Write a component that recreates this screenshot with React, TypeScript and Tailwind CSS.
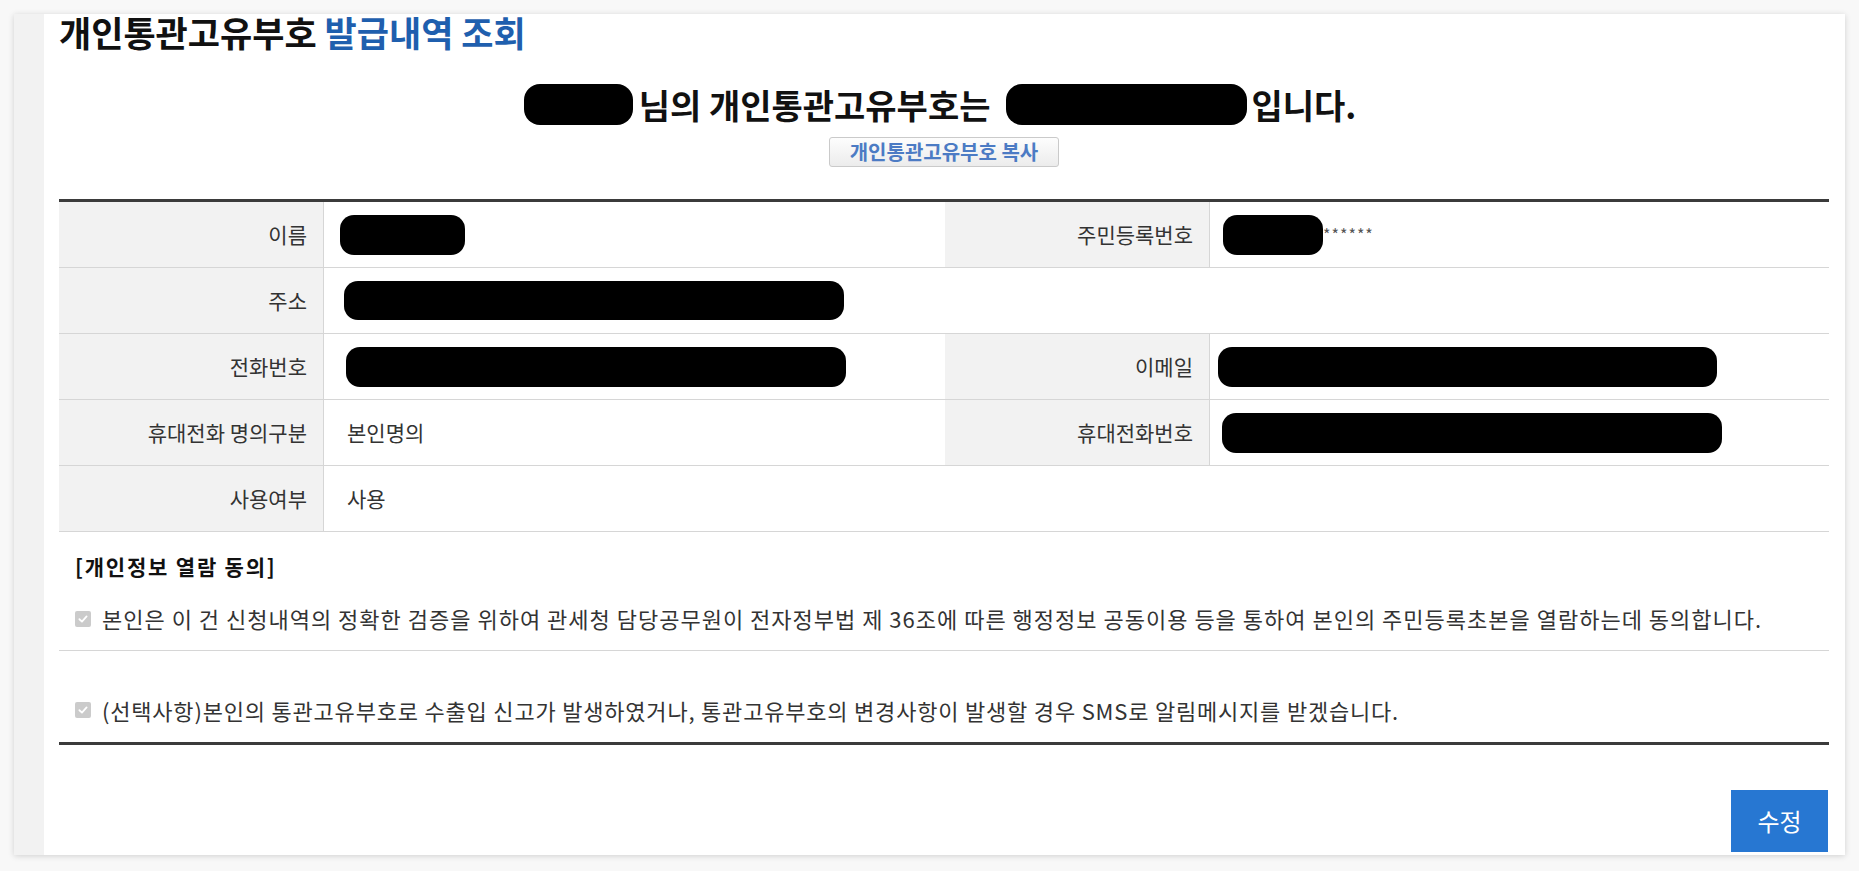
import React from 'react';

const Redact: React.FC<{ w: number; h?: number; className?: string }> = ({ w, h = 40, className = '' }) => (
  <span
    className={`inline-block bg-black rounded-[14px] align-middle ${className}`}
    style={{ width: w, height: h }}
  />
);

const CheckedBox: React.FC = () => (
  <span className="inline-flex items-center justify-center w-[16px] h-[16px] rounded-[2px] bg-[#cbcbcb] shrink-0">
    <svg viewBox="0 0 16 16" className="w-[12px] h-[12px]" fill="none" stroke="#fff" strokeWidth="2.4" strokeLinecap="round" strokeLinejoin="round">
      <path d="M3.2 8.3 6.6 11.4 12.8 4.6" />
    </svg>
  </span>
);

const Label: React.FC<{ children: React.ReactNode }> = ({ children }) => (
  <div className="bg-[#f2f2f2] border-r border-[#d6d6d6] flex items-center justify-end pr-[16px] text-[21px] text-[#333]">
    {children}
  </div>
);

const Value: React.FC<{ children?: React.ReactNode; span?: boolean }> = ({ children, span }) => (
  <div className={`flex items-center text-[21px] text-[#333] ${span ? 'col-span-3' : ''}`}>{children}</div>
);

export default function App() {
  return (
    <div className="min-h-[871px] bg-[#f8f8f8] pt-[14px] font-['Noto_Sans_CJK_KR','Malgun_Gothic',sans-serif]">
      <div className="ml-[14px] w-[1831px] h-[841px] bg-white shadow-[0_1px_6px_rgba(0,0,0,0.16)] flex">
        {/* left gray strip */}
        <div className="w-[30px] bg-[#f2f2f2] shrink-0" />

        <div className="flex-1 pl-[15px] pr-[16px] flex flex-col">
          <h1 className="text-[35px] font-bold leading-[36px] text-[#111]">
            개인통관고유부호 <span className="text-[#1f5fae]">발급내역 조회</span>
          </h1>

          <div className="mt-[33px] flex items-center justify-center h-[42px] text-[34px] font-bold text-[#111] pr-[8px]">
            <Redact w={109} h={41} className="rounded-[16px]" />
            <span className="ml-[6px]">님의 개인통관고유부호는</span>
            <Redact w={241} h={41} className="ml-[16px] rounded-[16px]" />
            <span className="ml-[4px]">입니다.</span>
          </div>

          <div className="mt-[12px] flex justify-center">
            <button className="h-[30px] px-[20px] border border-[#cacaca] rounded-[3px] bg-gradient-to-b from-[#fdfdfd] to-[#ececec] text-[20px] leading-none font-bold text-[#4c7bc4]">
              개인통관고유부호 복사
            </button>
          </div>

          {/* info table */}
          <div className="mt-[32px] border-t-[3px] border-[#3b3b3b] grid grid-cols-[265px_621px_265px_1fr] auto-rows-[66px] [&>*]:border-b [&>*]:border-[#d6d6d6]">
            <Label>이름</Label>
            <Value>
              <Redact w={125} className="ml-[16px]" />
            </Value>
            <Label>주민등록번호</Label>
            <Value>
              <Redact w={100} className="ml-[13px]" />
              <span className="text-[16px] text-[#555] tracking-[1px] -mt-[2px]">******</span>
            </Value>

            <Label>주소</Label>
            <Value span>
              <Redact w={500} h={39} className="ml-[20px]" />
            </Value>

            <Label>전화번호</Label>
            <Value>
              <Redact w={500} className="ml-[22px]" />
            </Value>
            <Label>이메일</Label>
            <Value>
              <Redact w={499} className="ml-[8px]" />
            </Value>

            <Label>휴대전화 명의구분</Label>
            <Value>
              <span className="ml-[23px]">본인명의</span>
            </Value>
            <Label>휴대전화번호</Label>
            <Value>
              <Redact w={500} className="ml-[12px]" />
            </Value>

            <Label>사용여부</Label>
            <Value span>
              <span className="ml-[23px]">사용</span>
            </Value>
          </div>

          {/* consent */}
          <div className="mt-[19px] pl-[16px] text-[21px] font-bold text-[#111] leading-[30px] tracking-[1.8px]">
            [개인정보 열람 동의]
          </div>
          <div className="h-[70px] pt-[6px] flex items-center gap-[11px] pl-[16px] border-b border-[#d6d6d6] text-[22px] tracking-[1px] text-[#333]">
            <CheckedBox />
            <span>본인은 이 건 신청내역의 정확한 검증을 위하여 관세청 담당공무원이 전자정부법 제 36조에 따른 행정정보 공동이용 등을 통하여 본인의 주민등록초본을 열람하는데 동의합니다.</span>
          </div>
          <div className="pt-[44px] pb-[17px] flex items-center gap-[11px] pl-[16px] border-b-[3px] border-[#3b3b3b] text-[22px] leading-[30px] tracking-[0.8px] text-[#333]">
            <CheckedBox />
            <span>(선택사항)본인의 통관고유부호로 수출입 신고가 발생하였거나, 통관고유부호의 변경사항이 발생할 경우 SMS로 알림메시지를 받겠습니다.</span>
          </div>

          <div className="mt-[45px] flex justify-end pr-[1px]">
            <button className="w-[97px] h-[62px] bg-[#2777d2] text-white text-[24px]">수정</button>
          </div>
        </div>
      </div>
    </div>
  );
}
